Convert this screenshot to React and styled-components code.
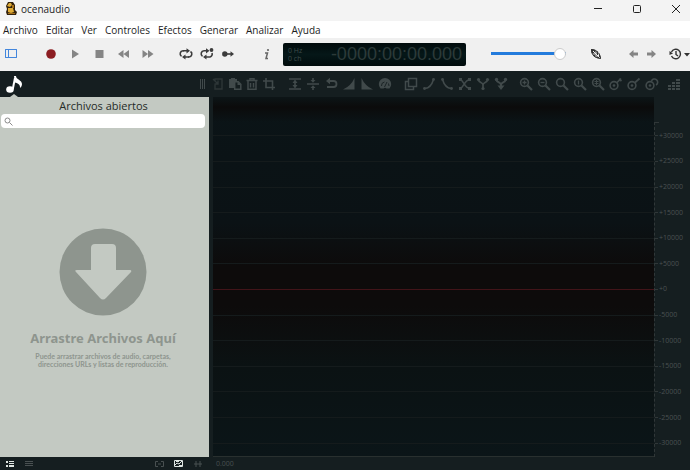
import React, { useState } from "react";
import styled, { createGlobalStyle } from "styled-components";

const GlobalStyle = createGlobalStyle`
  * { box-sizing: border-box; }
  body { margin: 0; background: #151e20; font-family: "Open Sans", "Noto Sans", sans-serif; }
  button, input { font: inherit; color: inherit; }
`;

const Window = styled.div`
  display: flex;
  flex-direction: column;
  min-height: 100vh;
`;

const TitleBar = styled.header`
  display: flex;
  align-items: center;
  height: 21px;
  padding: 0 4px 4px;
  background: #f3f3f3;
  color: #222;
`;

const AppTitle = styled.h1`
  flex: 1;
  margin: 0 0 0 4px;
  font-size: 10px;
  line-height: 14px;
  font-weight: 400;
`;

const PlainButton = styled.button`
  display: flex;
  align-items: center;
  justify-content: center;
  flex: none;
  padding: 0;
  border: 0;
  background: none;
`;

const WindowButton = styled(PlainButton)`
  width: 20px;
  height: 16px;
  margin-left: 19px;
`;

const MenuBar = styled.nav`
  display: flex;
  gap: 8px;
  height: 17px;
  padding: 0 3px;
  background: #fff;
`;

const MenuItem = styled(PlainButton)`
  font-size: 10px;
  line-height: 16px;
  color: #1d1d1d;
`;

const MainToolbar = styled.div`
  display: flex;
  align-items: center;
  height: 33px;
  padding-bottom: 2px;
  background: #f0f0f0;
  color: #858585;
`;

const ToolGroup = styled.div`
  display: flex;
  flex: none;
  margin-left: ${(p) => p.$before || 0}px;
`;

const ToolButton = styled(PlainButton)`
  width: ${(p) => p.$width || 18}px;
  height: 20px;
  color: ${(p) => p.$color || "inherit"};
`;

const Spacer = styled.div`
  flex: 1;
`;

const Display = styled.div`
  display: flex;
  align-items: center;
  justify-content: space-between;
  flex: none;
  width: 183px;
  height: 23px;
  margin-left: 7px;
  margin-top: 2px;
  padding: 0 4px 0 5px;
  border-radius: 2px;
  background: linear-gradient(#010b0c, #051718 50%, #010c0d);
  color: #3c4c4b;
`;

const Format = styled.div`
  font-size: 7px;
  line-height: 8px;
  white-space: nowrap;
`;

const Clock = styled.output`
  font-family: "Liberation Sans", sans-serif;
  font-size: 18px;
  line-height: 23px;
  color: #2c3a39;
`;

const Volume = styled.input`
  appearance: none;
  flex: none;
  width: 75px;
  height: 14px;
  margin: 0 0 0 25px;
  background: linear-gradient(#237bdc, #237bdc) center / 100% 3px no-repeat;
  &::-webkit-slider-thumb {
    appearance: none;
    width: 12px;
    height: 12px;
    border: 1px solid #ccc;
    border-radius: 50%;
    background: #fff;
  }
`;

const EditBar = styled.div`
  display: flex;
  align-items: center;
  height: 26px;
  padding-right: 7px;
  background: #151e20;
  color: #414a4b;
`;

const FilesTab = styled(PlainButton)`
  flex-direction: column;
  justify-content: space-between;
  width: 28px;
  height: 26px;
  padding-top: 4px;
  color: #fff;
`;

const Body = styled.main`
  display: grid;
  grid-template-columns: 209px 1fr;
  flex: 1;
  background: #151e20;
`;

const FilesPanel = styled.section`
  display: flex;
  flex-direction: column;
  background: #c3c9c2;
`;

const PanelTitle = styled.h2`
  margin: 0;
  padding-right: 2px;
  font-family: "Open Sans", sans-serif;
  font-size: 11px;
  line-height: 17px;
  font-weight: 400;
  text-align: center;
  color: #262b28;
`;

const SearchBox = styled.label`
  display: flex;
  align-items: center;
  height: 14px;
  margin: 0 4px 0 1px;
  padding: 0 3px;
  border-radius: 4px;
  background: #fff;
  color: #8b8b8b;
`;

const SearchInput = styled.input`
  flex: 1;
  min-width: 0;
  height: 12px;
  padding: 0 4px;
  border: 0;
  outline: 0;
  background: none;
  font-size: 9px;
`;

const DropZone = styled.div`
  display: flex;
  flex-direction: column;
  align-items: center;
  flex: 1;
  padding: 100px 3px 0 0;
  font-family: "Noto Sans", sans-serif;
  font-weight: 700;
  text-align: center;
  color: #8e958e;
`;

const DropTitle = styled.p`
  margin: 13px 0 5px;
  font-size: 13px;
  line-height: 18px;
`;

const DropHint = styled.p`
  margin: 0;
  font-family: Lato, sans-serif;
  font-size: 7px;
  line-height: 8px;
`;

const Editor = styled.section`
  display: grid;
  grid-template-columns: 1fr 36px;
  margin-left: 4px;
`;

const Plot = styled.div`
  display: flex;
  flex-direction: column;
  padding-top: 25px;
  border-top: 1px solid #0d1416;
  border-bottom: 1px solid #29302f;
  background:
    linear-gradient(#0c1416, #0b0b0b 9px, rgba(11, 11, 11, 0) 24px),
    linear-gradient(#0b1417, #0b1215 35%, #0d0b0b 47%, #0d0b0b 58%, #0b1213 75%, #0b1518);
`;

const GridRow = styled.div`
  display: flex;
  align-items: center;
  flex: 1;
  &::before {
    content: "";
    flex: 1;
    height: 1px;
    background: ${(p) => (p.$zero ? "#421419" : "#151b1c")};
  }
`;

const Scale = styled.div`
  display: flex;
  flex-direction: column;
  margin: 25px 0 0;
  padding: 1px 0;
  border-left: 1px dashed #303738;
  background: linear-gradient(#303738, #303738) 0 0 / 4px 1px no-repeat;
`;

const ScaleLabel = styled.div`
  display: flex;
  align-items: center;
  gap: 1px;
  flex: 1;
  font-size: 7px;
  line-height: 8px;
  color: #4b5152;
  &::before {
    content: "";
    width: 3px;
    height: 1px;
    background: #303738;
  }
`;

const StatusBar = styled.footer`
  display: grid;
  grid-template-columns: 209px 1fr;
  align-items: center;
  height: 13px;
  background: #151e20;
  color: #495051;
`;

const StatusIcons = styled.div`
  display: flex;
  align-items: center;
  padding-right: 2px;
`;

const StatusButton = styled(PlainButton)`
  width: 19px;
  height: 13px;
  color: ${(p) => (p.$active ? "#dfe5e2" : "inherit")};
`;

const TimeMark = styled.span`
  padding-left: 7px;
  font-size: 7px;
  line-height: 13px;
`;

const Glyph = styled.svg`
  display: block;
  flex: none;
  fill: none;
  stroke: currentColor;
  stroke-width: ${(p) => p.$stroke || 2};
  .f { fill: currentColor; stroke: none; }
`;

function Icon({ children, w = 18, h = 18, stroke }) {
  return (
    <Glyph width={w} height={h} viewBox={`0 0 ${w} ${h}`} $stroke={stroke} aria-hidden="true">
      {children}
    </Glyph>
  );
}

const lens = (
  <>
    <circle cx="7.5" cy="7.5" r="3.9" strokeWidth="1.6" />
    <path d="M10.5 10.5 15 15" strokeWidth="2.2" />
  </>
);

const key = (
  <>
    <circle cx="7" cy="10.5" r="3.9" strokeWidth="1.6" />
    <circle className="f" cx="7" cy="10.5" r="1.3" />
  </>
);

const transport = [
  ["Grabar", <circle className="f" cx="9" cy="9" r="4.8" />, "#8c1d22"],
  ["Reproducir", <path className="f" d="M6 4.500 13 9 6 13.500z" />],
  ["Detener", <path className="f" d="M5.500 5h8v8h-8z" />],
  ["Retroceder", <path className="f" d="M9.500 5v8L4 9zM15 5v8L9.500 9z" />],
  ["Avanzar", <path className="f" d="M4.500 5v8l5.500-4zM10 5v8l5.500-4z" />],
];

const playModes = [
  ["Repetir", <><path strokeWidth="1.600" d="M7 5.800H6a3 3 0 0 0-1.500 5.500M11 12h1a3 3 0 0 0 1.500-5.500" /><path strokeWidth="1.600" d="M6 5.800h5M7 12h5" /><path className="f" d="M9.500 3.200v5.200L13 5.800zM8.500 9.400v5.200L5 12z" /></>],
  ["Repetir selección", <><path strokeWidth="1.600" d="M10 5.800H6a3 3 0 0 0-1.500 5.500M7 12h5a3 3 0 0 0 2-4" /><path className="f" d="M8 3.200v5.200l3.500-2.600zM8.500 9.400v5.200L5 12z" /><circle className="f" cx="13.500" cy="5" r="1.900" /></>],
  ["Saltar", <><circle className="f" cx="5.800" cy="9" r="2.700" /><path strokeWidth="1.600" d="M8 9h4" /><path className="f" d="M11.500 6.200v5.600L15 9z" /></>],
];

const clipboardTools = [
  ["Copiar", <path opacity=".55" strokeWidth="1.400" d="M6 5.500V4h7v10H6V9.500M4 4l5 5M9 5.500V9H5.500" />],
  ["Pegar", <><path className="f" d="M3 4h2V3h4v1h2v2H8v7H3z" /><path strokeWidth="1.500" d="M8.700 6.700h3.600l2.500 2.500v5.100H8.700z" /><path className="f" d="M11.500 6v4h4z" /></>],
  ["Eliminar", <path strokeWidth="1.500" d="M3.500 5.500h11M7 5V3.700h4V5M5 6v8.300h8V6M7.500 8v4.500M10.500 8v4.500" />],
  ["Recortar", <path strokeWidth="1.600" d="M3 6h9.500v9M6 3v9.500h9" />],
];

const editTools = [
  ["Normalizar", <><path strokeWidth="1.600" d="M3 4h12M3 14h12M9 6v6" /><path className="f" d="M9 4.500 11.500 8h-5zM9 13.500 6.500 10h5z" /></>],
  ["Ganancia", <><path d="M3 9h12M9 3v3M9 12v3" strokeWidth="1.600" /><path className="f" d="M6.500 5h5L9 7.800zM6.500 13h5L9 10.200z" /></>],
  ["Invertir", <><path strokeWidth="1.800" d="M7 6h4.500a3 3 0 0 1 0 6H5" /><path className="f" d="M8 2.800v6.400L4 6z" /></>],
  ["Aumentar", <path className="f" d="M3 14.500Q11 11 14.500 3v11.500z" />],
  ["Desvanecer", <path className="f" d="M3.500 3Q7 11 15 14.500H3.500z" />],
  ["Medidor", <><path className="f" d="M4.500 13.500A6.200 6.200 0 1 1 13.500 13.500H10.500a2 2 0 0 0-3 0z" /><path d="m8.500 12 2.500-5M5.500 11a3.700 3.700 0 0 1 3-4M12.500 8.500l.5 2.500" strokeWidth=".9" stroke="#151e20" /></>],
];

const mixTools = [
  ["Duplicar", <path strokeWidth="1.500" d="M6.500 3.500h8v8h-8zM6.500 6.500h-3v8h8v-3" />],
  ["Fundido de entrada", <><path strokeWidth="1.600" d="M5 13.500c5-.5 7-4 8.500-9" /><circle className="f" cx="4.500" cy="13.500" r="1.400" /><circle className="f" cx="13.500" cy="4.500" r="1.400" /></>],
  ["Fundido de salida", <><path strokeWidth="1.600" d="M4.500 4.500c1.500 5 3.500 8.500 8.500 9" /><circle className="f" cx="4.500" cy="4.500" r="1.400" /><circle className="f" cx="13.500" cy="13.500" r="1.400" /></>],
  ["Fundido cruzado", <><path strokeWidth="1.600" d="M4 4.500C8 5 8 13 14 13.500M4 13.500C8 13 8 5 14 4.500" /><path className="f" d="M3 3h3v3H3zM12 3h3v3h-3zM3 12h3v3H3zM12 12h3v3h-3z" /></>],
  ["Unir", <><path strokeWidth="1.700" d="M4.500 5C5 8 9 7 9 10v4M13.500 5C13 8 9 7 9 10" /><circle className="f" cx="4.500" cy="4.500" r="1.600" /><circle className="f" cx="13.500" cy="4.500" r="1.600" /><circle className="f" cx="9" cy="13.500" r="1.600" /></>],
  ["Mezclar", <><path d="M4.500 5C5 8 9 7 9 10v3M13.500 5C13 8 9 7 9 10" /><circle className="f" cx="4.500" cy="4.500" r="1.700" /><circle className="f" cx="13.500" cy="4.500" r="1.700" /><path className="f" d="M5.500 10.500h7L9 15z" /></>],
];

const zoomTools = [
  ["Acercar", <>{lens}<path d="M5.500 7.500h4M7.500 5.500v4" strokeWidth="1.300" /></>],
  ["Alejar", <>{lens}<path d="M5.500 7.500h4" strokeWidth="1.300" /></>],
  ["Ver todo", lens],
  ["Zoom original", <>{lens}<path d="M7.500 5.500v4" strokeWidth="1.300" /></>],
  ["Zoom a selección", <>{lens}<path d="M5.500 6.500h4M5.500 8.500h4M7.500 5v5" strokeWidth="1" /></>],
  ["Acercar vertical", <>{key}<path strokeWidth="1.700" d="m9.500 8 4.500-4.500M12 4l2.500 2" /></>],
  ["Alejar vertical", <>{key}<path strokeWidth="1.700" d="m9.500 8 5-4.500" /></>],
  ["Restablecer vertical", <>{key}<path strokeWidth="1.600" d="M8.500 6a3.200 3.200 0 1 1 4.500 4" /></>],
];

function Tools({ items, before, width, color }) {
  return (
    <ToolGroup $before={before}>
      {items.map(([name, drawing, own]) => (
        <ToolButton key={name} aria-label={name} $width={width} $color={own || color}>
          <Icon>{drawing}</Icon>
        </ToolButton>
      ))}
    </ToolGroup>
  );
}

const menus = ["Archivo", "Editar", "Ver", "Controles", "Efectos", "Generar", "Analizar", "Ayuda"];
const levels = [30000, 25000, 20000, 15000, 10000, 5000, 0, -5000, -10000, -15000, -20000, -25000, -30000];

export default function App() {
  const [volume, setVolume] = useState(100);
  const [query, setQuery] = useState("");
  return (
    <Window>
      <GlobalStyle />
      <TitleBar>
        <Icon w={13} h={15}>
          <path className="f" style={{ fill: "#33220c" }} d="M4 1h5l2 3v5l2 2-1 3H3l-1-3 1-3-1-3z" />
          <path className="f" style={{ fill: "#e0ac36" }} d="M5 2h2l1 2-2 2-3-1zM4 7h5l1 4-3 1-3-1z" />
          <path className="f" style={{ fill: "#a66e15" }} d="M8 4h2v3H8zM4 12h7v1H4z" />
        </Icon>
        <AppTitle>ocenaudio</AppTitle>
        <WindowButton aria-label="Minimizar"><Icon w={10} h={10} stroke={1}><path d="M1 4.500h8" /></Icon></WindowButton>
        <WindowButton aria-label="Maximizar"><Icon w={10} h={10} stroke={1}><rect x="1.500" y="1.500" width="7" height="7" rx="1" /></Icon></WindowButton>
        <WindowButton aria-label="Cerrar"><Icon w={10} h={10} stroke={1}><path d="m1 1 8 8M9 1 1 9" /></Icon></WindowButton>
      </TitleBar>
      <MenuBar>
        {menus.map((m) => <MenuItem key={m}>{m}</MenuItem>)}
      </MenuBar>
      <MainToolbar>
        <ToolGroup $before={2}>
          <ToolButton aria-label="Panel lateral" $color="#4386dc">
            <Icon stroke={1}><path d="M3.500 4.500h11v8h-11zM6.500 5v7" /><path d="M3.500 4.500h11v8h-11z" /></Icon>
          </ToolButton>
        </ToolGroup>
        <Tools items={transport} before={19} width={24} />
        <Tools items={playModes} before={16} width={21} color="#3c3c3c" />
        <ToolGroup $before={20}>
          <ToolButton aria-label="Información" $color="#666">
            <Icon><path strokeWidth="1.500" d="M7 8h2.500L8 13.500h2" /><circle className="f" cx="10" cy="5" r="1.100" /></Icon>
          </ToolButton>
        </ToolGroup>
        <Display>
          <Format>0 Hz<br />0 ch</Format>
          <Clock>-0000:00:00.000</Clock>
        </Display>
        <Volume type="range" aria-label="Volumen" value={volume} onChange={(e) => setVolume(e.target.value)} />
        <Spacer />
        <ToolGroup>
          <ToolButton aria-label="Efectos" $color="#333">
            <Icon stroke={1}><path className="f" d="M4 4c5-.500 9 3 10 9.500C8 14 4 10 4 4z" /><path stroke="#f0f0f0" d="m6 6 7 7M9 5v4H5M11.500 7v4H8" /><path d="M4.500 4.500C9 5 13 8 13.500 13.500 8 13 4.500 10 4.500 4.500z" /></Icon>
          </ToolButton>
        </ToolGroup>
        <ToolGroup $before={19}>
          <ToolButton aria-label="Atrás"><Icon><path className="f" d="M5 9l4.500-4v2.500H14v3H9.500V13z" /></Icon></ToolButton>
          <ToolButton aria-label="Adelante"><Icon><path className="f" d="M14 9 9.500 5v2.500H5v3h4.500V13z" /></Icon></ToolButton>
        </ToolGroup>
        <ToolGroup $before={6}>
          <ToolButton aria-label="Historial" $width={24} $color="#333">
            <Icon w={24}>
              <path strokeWidth="1.400" d="M5.500 7a4.700 4.700 0 1 1 0 4M10 6v3.500l2 1.500" />
              <path className="f" d="M3.500 6v4l3.500-1.500zM18 8h6l-3 3.500z" />
            </Icon>
          </ToolButton>
        </ToolGroup>
      </MainToolbar>
      <EditBar>
        <FilesTab aria-label="Archivos abiertos">
          <Icon w={18} h={19}>
            <ellipse className="f" cx="5" cy="14.500" rx="3.800" ry="3.300" />
            <path d="M7.800 14 10 3" />
            <path className="f" d="M9 1h2c0 3.500 6 4 6 8 0 2-1 3-2 4 .500-4-3-5-5-5.500z" />
          </Icon>
          <Icon w={8} h={3}><path className="f" style={{ fill: "#c3c9c2" }} d="M4 0 8 3H0z" /></Icon>
        </FilesTab>
        <Spacer />
        <Icon w={6} h={10} stroke={1}><path d="M.500 0v10M2.500 0v10M4.500 0v10" /></Icon>
        <Tools items={clipboardTools} before={3} width={17} />
        <Tools items={editTools} before={9} />
        <Tools items={mixTools} before={8} />
        <Tools items={zoomTools} before={7} />
        <ToolGroup $before={4}>
          <ToolButton aria-label="Niveles">
            <Icon stroke={2}><path d="M3 14h3M3 11h3M7 14h3M7 11h3M7 8h3M11 14h4M11 11h4M11 8h4M11 5h4" /></Icon>
          </ToolButton>
        </ToolGroup>
      </EditBar>
      <Body>
        <FilesPanel>
          <PanelTitle>Archivos abiertos</PanelTitle>
          <SearchBox>
            <Icon w={9} h={9} stroke={1}><circle cx="3.500" cy="3.500" r="2.500" /><path d="m5.500 5.500 3 3" /></Icon>
            <SearchInput aria-label="Buscar archivos" value={query} onChange={(e) => setQuery(e.target.value)} />
          </SearchBox>
          <DropZone>
            <Icon w={88} h={88}>
              <circle className="f" cx="44" cy="44" r="43.500" />
              <path className="f" style={{ fill: "#c3c9c2" }} d="M36 16h17q4 0 4 4v22h14q2 0 1 2L47 70q-3 3-6 0L17 44q-2-2 1-2h14V20q0-4 4-4z" />
            </Icon>
            <DropTitle>Arrastre Archivos Aquí</DropTitle>
            <DropHint>Puede arrastrar archivos de audio, carpetas,<br />direcciones URLs y listas de reproducción.</DropHint>
          </DropZone>
        </FilesPanel>
        <Editor>
          <Plot>
            {levels.map((v) => <GridRow key={v} $zero={v === 0} />)}
          </Plot>
          <Scale>
            {levels.map((v) => <ScaleLabel key={v}>{v < 0 ? v : `+${v}`}</ScaleLabel>)}
          </Scale>
        </Editor>
      </Body>
      <StatusBar>
        <StatusIcons>
          <StatusButton aria-label="Lista detallada" $active><Icon w={9} h={6}><path className="f" d="M1 0h2v2H1zM1 4h2v2H1zM4 0h5v1H4zM4 2h5v1H4zM4 4h5v2H4z" /></Icon></StatusButton>
          <StatusButton aria-label="Lista simple"><Icon w={8} h={6} stroke={1}><path d="M0 .500h8M0 2.500h8M0 4.500h8" /></Icon></StatusButton>
          <Spacer />
          <StatusButton aria-label="Enlazar"><Icon w={9} h={6} stroke={1}><path d="M3 .500H.500v5H3M6 .500h2.500v5H6M3 3h3" /></Icon></StatusButton>
          <StatusButton aria-label="Forma de onda" $active><Icon w={9} h={7} stroke={1}><path d="M.500.500h8v6h-8zM1 5l2-2 2 1 3-3M2 1.500h3M5 5.500h3" /></Icon></StatusButton>
          <StatusButton aria-label="Canales"><Icon w={8} h={6} stroke={1}><path d="M2 0v6M6 0v6M0 3h8" /></Icon></StatusButton>
        </StatusIcons>
        <TimeMark>0.000</TimeMark>
      </StatusBar>
    </Window>
  );
}
